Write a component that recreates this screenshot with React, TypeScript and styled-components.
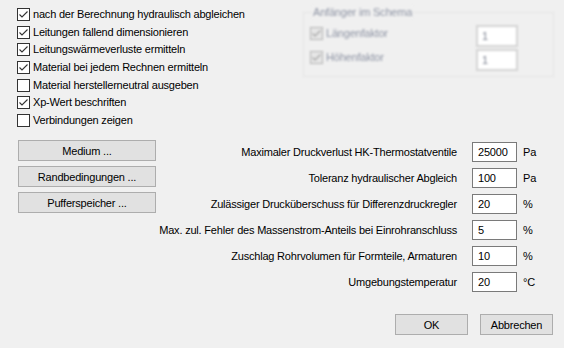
import { ReactElement, Fragment } from 'react'
import styled, { createGlobalStyle } from 'styled-components'

const GlobalStyle = createGlobalStyle`
  html, body {
    margin: 0;
    padding: 0;
    background: #f0f0f0;
  }
  body {
    font-family: "Liberation Sans", Arial, sans-serif;
    font-size: 11px;
    letter-spacing: -0.2px;
    color: #000;
  }
`

const Dialog = styled.div`
  width: 564px;
  height: 348px;
  box-sizing: border-box;
  overflow: hidden;
`

const TopArea = styled.div`
  display: flex;
  height: 140px;
`

const CheckList = styled.div`
  display: flex;
  flex-direction: column;
  padding: 8px 0 0 17px;
`

const CheckRow = styled.label<{ $disabled?: boolean }>`
  display: flex;
  align-items: center;
  gap: 3px;
  height: 13px;
  line-height: 13px;
  margin-bottom: 4.67px;
  white-space: nowrap;
  color: ${({ $disabled }) => ($disabled ? '#8e94a4' : '#000')};
`

const Box = styled.span<{ $disabled?: boolean }>`
  display: inline-flex;
  width: 13px;
  height: 13px;
  box-sizing: border-box;
  border: 1px solid ${({ $disabled }) => ($disabled ? '#b4b4b4' : '#333')};
  background: ${({ $disabled }) => ($disabled ? '#e6e6e6' : '#fff')};
  flex-shrink: 0;
`

const GroupBox = styled.div`
  position: relative;
  margin: 12px 10px 0 auto;
  width: 251px;
  height: 65px;
  box-sizing: border-box;
  border: 1px solid #e4e4e4;
  padding: 12px 35px 0 6px;
  display: flex;
  flex-direction: column;
  gap: 2px;
  filter: blur(0.8px);
`

const Legend = styled.span`
  position: absolute;
  top: -8px;
  left: 8px;
  padding: 0 1px;
  background: #f0f0f0;
  color: #8e94a4;
  line-height: 14px;
`

const GroupRow = styled.div`
  display: flex;
  align-items: center;
  justify-content: space-between;
  height: 22px;
`

const DimField = styled.div`
  width: 42px;
  height: 22px;
  box-sizing: border-box;
  border: 2px solid #d4d4d4;
  background: #fff;
  color: #7d8290;
  padding-left: 4px;
  line-height: 18px;
`

const Middle = styled.div`
  display: flex;
  padding-left: 18px;
`

const ButtonColumn = styled.div`
  display: flex;
  flex-direction: column;
  flex-shrink: 0;
  gap: 5px;
  width: 138px;
`

const PushButton = styled.button<{ $width?: number }>`
  width: ${({ $width }) => ($width ? `${$width}px` : '100%')};
  height: 21px;
  box-sizing: border-box;
  background: #e1e1e1;
  border: 1px solid #adadad;
  font-family: inherit;
  font-size: 11px;
  letter-spacing: -0.2px;
  color: #000;
  padding: 0;
  white-space: nowrap;
`

const Form = styled.div`
  margin: 2px 0 0 auto;
  display: grid;
  grid-template-columns: auto 45px 47px;
  grid-auto-rows: 20px;
  row-gap: 6px;
  align-items: center;
`

const FieldLabel = styled.span`
  justify-self: end;
  white-space: nowrap;
  margin-right: 15px;
`

const Field = styled.input`
  width: 45px;
  height: 20px;
  box-sizing: border-box;
  border: 1px solid #7a7a7a;
  background: #fff;
  font-family: inherit;
  font-size: 11px;
  letter-spacing: -0.2px;
  color: #000;
  padding: 0 0 0 5px;
  outline: none;
`

const Unit = styled.span`
  padding-left: 6px;
`

const Footer = styled.div`
  display: flex;
  justify-content: flex-end;
  gap: 12px;
  margin-top: 22px;
  padding-right: 11px;
`

const Check = ({ checked, disabled }: { checked: boolean; disabled?: boolean }): ReactElement => (
  <Box $disabled={disabled}>
    {checked && (
      <svg width="11" height="11" viewBox="0 0 11 11">
        <path
          d="M1.5 5.5 L4 8 L9.5 2.5"
          fill="none"
          stroke={disabled ? '#a0a0a0' : '#333'}
          strokeWidth="1.1"
        />
      </svg>
    )}
  </Box>
)

const options = [
  { text: 'nach der Berechnung hydraulisch abgleichen', checked: true },
  { text: 'Leitungen fallend dimensionieren', checked: true },
  { text: 'Leitungswärmeverluste ermitteln', checked: true },
  { text: 'Material bei jedem Rechnen ermitteln', checked: true },
  { text: 'Material herstellerneutral ausgeben', checked: false },
  { text: 'Xp-Wert beschriften', checked: true },
  { text: 'Verbindungen zeigen', checked: false },
]

const fields = [
  { label: 'Maximaler Druckverlust HK-Thermostatventile', value: '25000', unit: 'Pa' },
  { label: 'Toleranz hydraulischer Abgleich', value: '100', unit: 'Pa' },
  { label: 'Zulässiger Drucküberschuss für Differenzdruckregler', value: '20', unit: '%' },
  { label: 'Max. zul. Fehler des Massenstrom-Anteils bei Einrohranschluss', value: '5', unit: '%' },
  { label: 'Zuschlag Rohrvolumen für Formteile, Armaturen', value: '10', unit: '%' },
  { label: 'Umgebungstemperatur', value: '20', unit: '°C' },
]

const App = (): ReactElement => {
  return (
    <Dialog>
      <GlobalStyle />
      <TopArea>
        <CheckList>
          {options.map((o) => (
            <CheckRow key={o.text}>
              <Check checked={o.checked} />
              {o.text}
            </CheckRow>
          ))}
        </CheckList>
        <GroupBox>
          <Legend>Anfänger im Schema</Legend>
          <GroupRow>
            <CheckRow $disabled>
              <Check checked disabled />
              Längenfaktor
            </CheckRow>
            <DimField>1</DimField>
          </GroupRow>
          <GroupRow>
            <CheckRow $disabled>
              <Check checked disabled />
              Höhenfaktor
            </CheckRow>
            <DimField>1</DimField>
          </GroupRow>
        </GroupBox>
      </TopArea>
      <Middle>
        <ButtonColumn>
          <PushButton>Medium ...</PushButton>
          <PushButton>Randbedingungen ...</PushButton>
          <PushButton>Pufferspeicher ...</PushButton>
        </ButtonColumn>
        <Form>
          {fields.map((f) => (
            <Fragment key={f.label}>
              <FieldLabel>{f.label}</FieldLabel>
              <Field defaultValue={f.value} />
              <Unit>{f.unit}</Unit>
            </Fragment>
          ))}
        </Form>
      </Middle>
      <Footer>
        <PushButton $width={73}>OK</PushButton>
        <PushButton $width={73}>Abbrechen</PushButton>
      </Footer>
    </Dialog>
  )
}

export default App
